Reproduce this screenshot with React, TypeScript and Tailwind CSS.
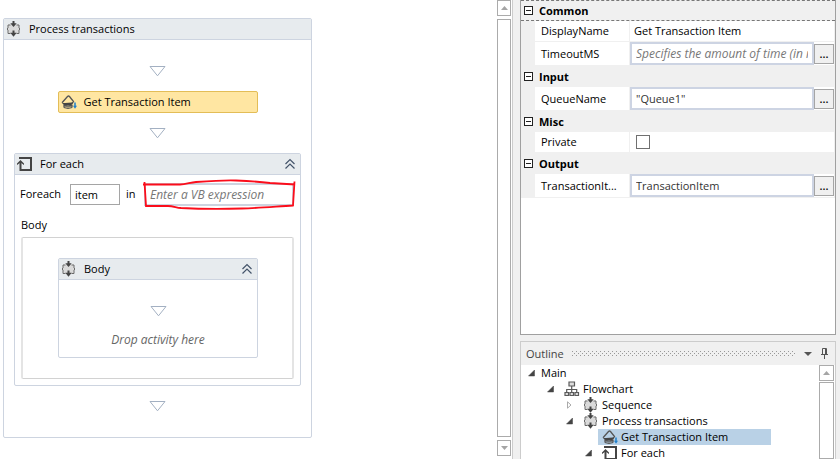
import type { ReactNode } from 'react';

interface IconProps {
  className?: string;
}

function SequenceIcon({ className = '' }: IconProps) {
  return (
    <svg viewBox="0 0 16 16" className={`size-4 shrink-0 ${className}`} fill="none">
      <path d="M2 3.500h11v9H2z" fill="#dadada" />
      <path d="M4.500 4H2v3L1 8l1 1v3.500h2.500M10.500 4H13v3l1 1-1 1v3.500h-2.500" stroke="#6a6a6a" />
      <path d="M7.500 0v3M7.500 9.500v3" stroke="#444" strokeWidth="2" />
      <path d="M4.300 2.300h6.400L7.500 6zM4.300 11.800h6.400L7.500 15.800z" fill="#444" />
    </svg>
  );
}

function QueueItemIcon({ className = '' }: IconProps) {
  return (
    <svg viewBox="0 0 16 16" className={`size-4 shrink-0 ${className}`} fill="none">
      <path d="M1 8.800 6.500 2.500q1-1 2 0l4 5-1.500 2" stroke="#555" strokeWidth="1.300" />
      <path d="M1 9h3l7-.5 1 .5-1.500 2H3z" fill="#444" />
      <path d="M3 11.500q4 1 8 0M3 13.500q4 1.500 8 0M3 10.500v3M11 10.500v3" stroke="#555" strokeWidth="1.300" />
      <path d="M14 8.500v4" stroke="#1f7fcb" strokeWidth="1.500" />
      <path d="M12 11.800h4l-2 3z" fill="#1f7fcb" />
    </svg>
  );
}

function LoopIcon({ className = '' }: IconProps) {
  return (
    <svg viewBox="0 0 16 16" className={`size-4 shrink-0 ${className}`} fill="none">
      <path d="M3 3V2h11v12H8" stroke="#444" strokeWidth="2" />
      <path d="M9 14H3.500V6" stroke="#444" strokeWidth="2" />
      <path d="M0 9V7.500L3.500 4 7 7.500V9L3.500 6.500z" fill="#444" />
    </svg>
  );
}

function FlowchartIcon({ className = '' }: IconProps) {
  return (
    <svg viewBox="0 0 16 16" className={`size-4 shrink-0 ${className}`} fill="none">
      <path d="M5 1h5.500v4H5zM1 11.500h3.500v3H1zM6 11.500h3.500v3H6zM11 11.500h3.500v3H11z" fill="#ddd" stroke="#5a5a5a" strokeWidth="1.200" />
      <path d="M7.700 5v6.500M2.700 11.500v-3h10v3" stroke="#5a5a5a" strokeWidth="1.200" />
    </svg>
  );
}

function CollapseIcon() {
  return (
    <svg viewBox="0 0 12 12" className="size-3" fill="none" stroke="#44546a" strokeWidth="1.200">
      <path d="M1.500 6 6 1.500 10.500 6M1.500 10.500 6 6l4.500 4.500" />
    </svg>
  );
}

function DropTarget() {
  return (
    <svg viewBox="0 0 17 11" className="h-[11px] w-[17px] shrink-0" fill="none" stroke="#a3b0c2">
      <path d="M1 .5h15L8.500 9.800z" />
    </svg>
  );
}

function PinIcon() {
  return (
    <svg viewBox="0 0 9 11" className="h-[11px] w-[9px]" fill="none" stroke="#555">
      <path d="M2.500 6V.5h4V6M5.500 1v5M1 6.500h7M4.500 7v4" />
    </svg>
  );
}

interface ActivityCardProps {
  title: string;
  icon: ReactNode;
  collapsible?: boolean;
  className?: string;
  children: ReactNode;
}

function ActivityCard({ title, icon, collapsible, className = '', children }: ActivityCardProps) {
  return (
    <section className={`rounded-xs border border-[#cdd4e0] bg-white ${className}`}>
      <header className="flex h-[21px] items-center gap-[7px] border-b border-[#cdd4e0] bg-[#e7ebee] px-[2px]">
        {icon}
        <h2 className="flex-1">{title}</h2>
        {collapsible && (
          <button type="button" aria-label={`Collapse ${title}`} className="mr-[2px]">
            <CollapseIcon />
          </button>
        )}
      </header>
      {children}
    </section>
  );
}

function ForEachForm() {
  return (
    <div className="flex h-[38px] items-center pl-[5px] pr-[6px]">
      <label htmlFor="item" className="w-[50px]">Foreach</label>
      <input id="item" defaultValue="item" className="h-[21px] w-[50px] border border-[#a5a5a5] px-1" />
      <label htmlFor="expression" className="w-6 pl-[6px]">in</label>
      <div className="relative flex-1">
        <input
          id="expression"
          placeholder="Enter a VB expression"
          className="block h-[23px] w-full border-2 border-[#cdd4e0] px-1 text-xs placeholder:italic placeholder:text-[#777]"
        />
        {/* hand-drawn highlight */}
        <svg viewBox="0 0 154 31" preserveAspectRatio="none" className="pointer-events-none absolute -left-[2px] -top-1 h-[31px] w-[calc(100%+4px)]" fill="none" stroke="#fb0d1b" strokeWidth="1.800">
          <path d="M1 5.500h37c6 0 10-2 16-2.500 14-1 28-2 40-1.500 12 .5 22 1 34 2.500l25 1.500M2.500 3l1.500 24h22c5 0 8 1.500 13 2 20 1 42 1 61 .5 17-.5 34-2 51-3l1.500-24" />
        </svg>
      </div>
    </div>
  );
}

function Designer() {
  return (
    <main className="flex min-w-0 flex-1 items-start overflow-hidden pl-[3px] pt-[18px]">
      <ActivityCard title="Process transactions" icon={<SequenceIcon />} className="w-[309px]">
        <div className="flex flex-col items-center px-[10px] pb-[25px] pt-[26px]">
          <DropTarget />
          <button type="button" className="mb-[15px] mt-[14px] flex h-[22px] w-[200px] items-center gap-[7px] rounded-xs border border-[#e3bd57] bg-[#ffe6a2] px-[2px]">
            <QueueItemIcon />
            Get Transaction Item
          </button>
          <DropTarget />
          <ActivityCard title="For each" icon={<LoopIcon />} collapsible className="mb-[15px] mt-[14px] w-full">
            <ForEachForm />
            <div className="px-[6px] pb-[6px]">
              <p className="flex h-6 items-center">Body</p>
              <div className="rounded-xs border border-x-2 border-[#d2d2d2] border-x-[#e4e4e4] py-[20px] pl-[35px] pr-[34px]">
                <ActivityCard title="Body" icon={<SequenceIcon />} collapsible>
                  <div className="flex flex-col items-center pb-2 pt-[26px]">
                    <DropTarget />
                    <p className="mt-[14px] text-xs leading-[18px] italic text-[#666]">Drop activity here</p>
                  </div>
                </ActivityCard>
              </div>
            </div>
          </ActivityCard>
          <DropTarget />
        </div>
      </ActivityCard>
    </main>
  );
}

function ScrollArrow({ down, label }: { down?: boolean; label: string }) {
  return (
    <button type="button" aria-label={label} className="flex h-4 shrink-0 items-center justify-center border border-[#ababab] bg-white">
      <svg viewBox="0 0 7 4" className="h-1 w-[7px]" fill="#a5a5a5">
        <path d={down ? 'M0 0h7L3.500 4z' : 'M0 4h7L3.500 0z'} />
      </svg>
    </button>
  );
}

interface PropertyRow {
  name: string;
  kind: 'plain' | 'expression' | 'check';
  value?: string;
  placeholder?: string;
}

const groups: { title: string; rows: PropertyRow[] }[] = [
  {
    title: 'Common',
    rows: [
      { name: 'DisplayName', kind: 'plain', value: 'Get Transaction Item' },
      { name: 'TimeoutMS', kind: 'expression', placeholder: 'Specifies the amount of time (in milliseconds)' },
    ],
  },
  { title: 'Input', rows: [{ name: 'QueueName', kind: 'expression', value: '"Queue1"' }] },
  { title: 'Misc', rows: [{ name: 'Private', kind: 'check' }] },
  { title: 'Output', rows: [{ name: 'TransactionIt...', kind: 'expression', value: 'TransactionItem' }] },
];

function PropertyField({ row }: { row: PropertyRow }) {
  if (row.kind === 'check') {
    return <input id={row.name} type="checkbox" className="ml-[6px] size-[14px] appearance-none border border-[#707070] bg-white" />;
  }
  if (row.kind === 'plain') {
    return <input id={row.name} defaultValue={row.value} className="w-full px-1" />;
  }
  return (
    <>
      <input
        id={row.name}
        defaultValue={row.value}
        placeholder={row.placeholder}
        className="h-[23px] min-w-0 flex-1 border-2 border-[#cdd4e3] px-1 text-[#333] placeholder:text-xs placeholder:italic placeholder:text-[#777]"
      />
      <button type="button" aria-label={`Edit ${row.name}`} className="h-5 w-5 border border-[#a5a5a5] bg-[#f0f0f0] font-semibold">...</button>
    </>
  );
}

function PropertiesPanel() {
  return (
    <section aria-label="Properties" className="h-[335px] shrink-0 border-x border-b border-[#a0a0a0] bg-white">
      {groups.map((group, index) => (
        <div key={group.title} className="bg-[#f0f0f0]">
          <h3 className={`flex h-[21px] items-center gap-[6px] pl-[3px] font-bold ${index === 0 ? 'border-y border-dashed border-[#777]' : ''}`}>
            <button type="button" aria-label={`Toggle ${group.title}`} className="flex size-[9px] items-center justify-center border border-[#222] bg-white">
              <span className="h-px w-[5px] bg-[#222]" />
            </button>
            {group.title}
          </h3>
          {group.rows.map((row) => (
            <div key={row.name} className={`ml-[14px] mr-px flex border-b border-[#f0f0f0] bg-white ${row.kind === 'expression' ? 'h-6' : 'h-[21px]'}`}>
              <label htmlFor={row.name} className="flex w-[95px] shrink-0 items-center border-r border-[#f0f0f0] pl-[6px]">{row.name}</label>
              <div className="flex min-w-0 flex-1 items-center">
                <PropertyField row={row} />
              </div>
            </div>
          ))}
        </div>
      ))}
    </section>
  );
}

interface TreeRow {
  label: string;
  depth: string;
  open: boolean | null;
  icon?: ReactNode;
}

const tree: TreeRow[] = [
  { label: 'Main', depth: 'pl-[7px]', open: true },
  { label: 'Flowchart', depth: 'pl-[26px]', open: true, icon: <FlowchartIcon /> },
  { label: 'Sequence', depth: 'pl-[45px]', open: false, icon: <SequenceIcon /> },
  { label: 'Process transactions', depth: 'pl-[45px]', open: true, icon: <SequenceIcon /> },
  { label: 'Get Transaction Item', depth: 'pl-[64px]', open: null, icon: <QueueItemIcon /> },
  { label: 'For each', depth: 'pl-[64px]', open: true, icon: <LoopIcon /> },
];

function TreeArrow({ open }: { open: boolean | null }) {
  return (
    <svg viewBox="0 0 7 8" className="h-2 w-[7px] shrink-0">
      {open === true && <path d="M6.500 1v6h-6z" fill="#444" stroke="#444" strokeWidth=".5" />}
      {open === false && <path d="M1.500.8v6.400L5 4z" fill="none" stroke="#aaa" />}
    </svg>
  );
}

function OutlinePanel() {
  return (
    <section className="flex min-h-0 flex-1 flex-col overflow-hidden border border-b-0 border-[#ccc]">
      <header className="flex h-[23px] shrink-0 items-center gap-2 pl-[5px] pr-[6px] text-[#444]">
        <h2>Outline</h2>
        <svg className="h-[5px] min-w-0 flex-1" shapeRendering="crispEdges" aria-hidden="true">
          <pattern id="grip" width="4" height="4" patternUnits="userSpaceOnUse">
            <path d="M0 0h1v1H0zM2 2h1v1H2z" fill="#999" />
          </pattern>
          <rect width="100%" height="5" fill="url(#grip)" />
        </svg>
        <button type="button" aria-label="Outline options">
          <svg viewBox="0 0 8 4" className="h-1 w-2" fill="#555">
            <path d="M0 0h8L4 4z" />
          </svg>
        </button>
        <button type="button" aria-label="Pin outline">
          <PinIcon />
        </button>
      </header>
      <div className="flex min-h-0 flex-1 bg-white">
        <ul className="min-w-0 flex-1">
          {tree.map((row) => (
            <li key={row.label} className={`flex h-4 items-center gap-[10px] ${row.depth}`}>
              <TreeArrow open={row.open} />
              <span className={`flex h-4 items-center gap-[3px] ${row.open === null ? '-ml-1 w-[173px] bg-[#b9d1e6] pl-1' : ''} ${row.icon ? '' : '-ml-1'}`}>
                {row.icon}
                {row.label}
              </span>
            </li>
          ))}
        </ul>
        <div className="mr-px flex w-[15px] flex-col gap-px">
          <ScrollArrow label="Scroll outline up" />
          <div className="flex-1 border border-[#ababab] bg-white" />
        </div>
      </div>
    </section>
  );
}

export default function App() {
  return (
    <div className="flex h-screen overflow-hidden bg-white font-['Open_Sans',sans-serif] text-[11px] leading-4 text-black">
      <Designer />
      <div className="flex w-4 shrink-0 flex-col gap-[3px] border-r border-[#ccc] pb-[3px] pr-px">
        <ScrollArrow label="Scroll up" />
        <div className="flex-1 border border-[#ababab] bg-white" />
        <ScrollArrow down label="Scroll down" />
      </div>
      <aside className="flex w-[327px] shrink-0 flex-col gap-[6px] bg-[#f0f0f0] pl-[7px] pr-1">
        <PropertiesPanel />
        <OutlinePanel />
      </aside>
    </div>
  );
}
